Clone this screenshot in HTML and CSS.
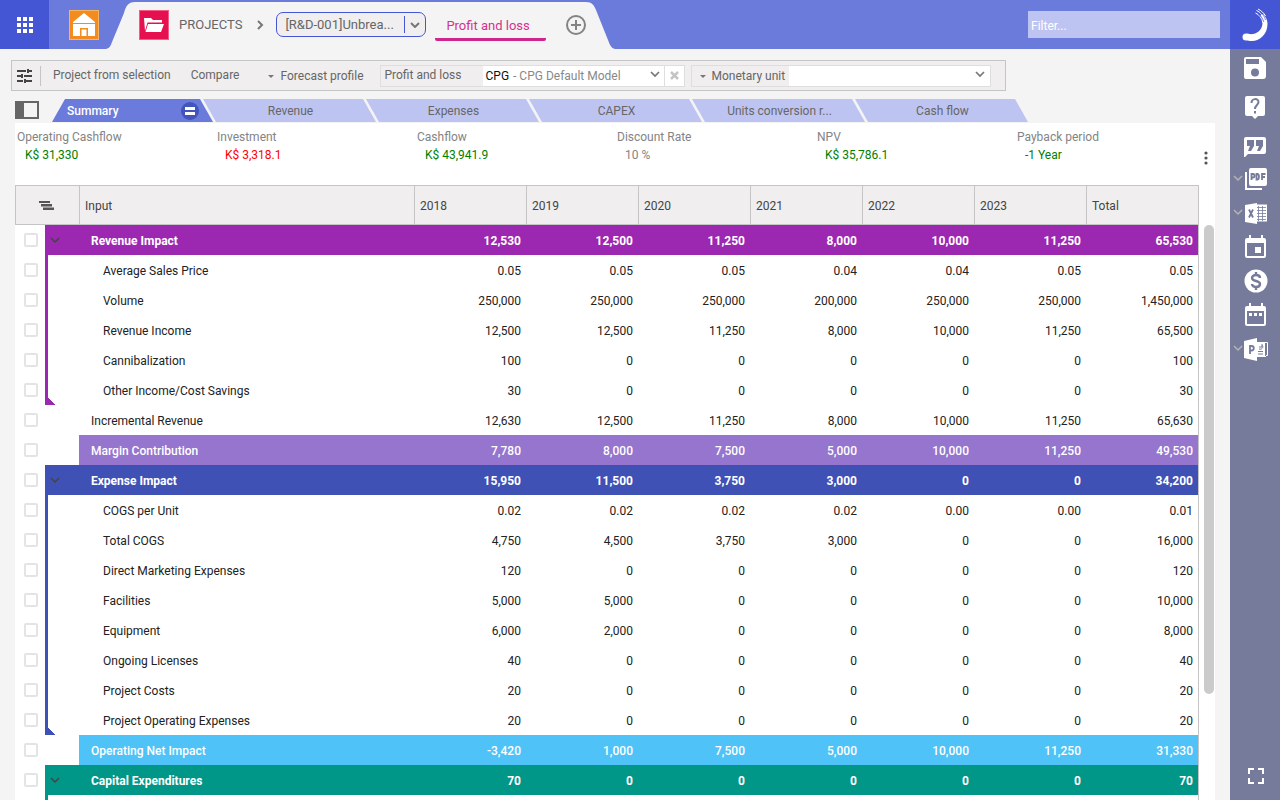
FILE: index.html
```html
<!DOCTYPE html>
<html lang="en">
<head>
    <meta charset="UTF-8">
    <meta name="viewport" content="width=device-width, initial-scale=1.0">
    <title>Profit and loss</title>
    <link rel="stylesheet" href="styles.css">
</head>
<body>
<div class="app">
    <main class="main">
        <!-- Top bar -->
        <header class="topbar">
            <button class="apps-button" aria-label="Applications">
                <svg width="16" height="16" viewBox="0 0 16 16" fill="#fff"><path d="M0 0h4v4H0zM6 0h4v4H6zM12 0h4v4h-4zM0 6h4v4H0zM6 6h4v4H6zM12 6h4v4h-4zM0 12h4v4H0zM6 12h4v4H6zM12 12h4v4h-4z"/></svg>
            </button>
            <a class="home-link" href="#" aria-label="Home">
                <svg width="30" height="30" viewBox="0 0 30 30">
                    <path fill="#f7b562" d="M0 0h30v30H0z"/><path fill="#f28c1e" d="M1 1h28v28H1z"/>
                    <path fill="#fff" d="M15 3l11 9v1H4v-1zM4 14h22v12H4z"/>
                    <path fill="#f28c1e" d="M11 18h8v8h-8z"/><path fill="#fff" d="M12.500 19.500h5V26h-5z"/>
                </svg>
            </a>
            <svg class="crumb-edge" width="29" height="47" viewBox="0 0 29 47" fill="#f4f4f4"><path d="M0 47C4 46 5 43 6 40L18 11C20 4 22 0 29 0V47z"/></svg>
            <nav class="crumbs">
                <svg width="30" height="30" viewBox="0 0 30 30">
                    <path fill="#f25c86" d="M0 0h30v30H0z"/><path fill="#e60f50" d="M1 1h28v28H1z"/>
                    <path fill="#fff" d="M6 21L5 8h7l2 2h9v2.500H8.500z"/>
                    <path fill="#fff" d="M9 14h16l-3 8H6.500z"/>
                </svg>
                <a class="crumb" href="#">PROJECTS</a>
                <svg class="crumb-arrow" width="8" height="10" viewBox="0 0 8 10" fill="none" stroke="#777" stroke-width="2"><path d="M2 1l4 4-4 4"/></svg>
                <div class="project-pick">
                    <select class="project-select" aria-label="Project"><option>[R&amp;D-001]Unbrea...</option></select>
                    <span class="project-line"></span>
                    <svg width="10" height="6" viewBox="0 0 10 6" fill="none" stroke="#777" stroke-width="2"><path d="M1 1l4 4 4-4"/></svg>
                </div>
                <a class="crumb-current" href="#">Profit and loss</a>
                <button class="add-button" aria-label="Add">
                    <svg width="20" height="20" viewBox="0 0 20 20" fill="none" stroke="#848484" stroke-width="2"><circle cx="10" cy="10" r="9"/><path d="M10 5v10M5 10h10"/></svg>
                </button>
            </nav>
            <svg class="crumb-edge" width="29" height="47" viewBox="0 0 29 47" fill="#f4f4f4"><path d="M0 0C6 0 8 3 10 8L22 38C24 43 25 46 29 47H0z"/></svg>
            <input class="filter" type="text" placeholder="Filter..." aria-label="Filter">
        </header>

        <!-- Toolbar -->
        <div class="toolbar">
            <button class="tool-button tune" aria-label="Settings">
                <svg width="16" height="14" viewBox="0 0 16 14" fill="#444"><path d="M0 1h9v2H0zM10 0h2v4h-2zM12 1h3v2h-3zM0 6h4v2H0zM4 5h2v4H4zM7 6h8v2H7zM0 11h6v2H0zM7 10h2v4H7zM9 11h6v2H9z"/></svg>
            </button>
            <button class="tool-button">Project from selection</button>
            <button class="tool-button compare">Compare</button>
            <button class="tool-button forecast"><span class="caret"></span>Forecast profile</button>
            <div class="field">
                <label class="field-label" for="model">Profit and loss</label>
                <div class="field-box model-box">
                    <span class="code">CPG</span>
                    <select id="model"><option>- CPG Default Model</option></select>
                    <svg width="12" height="10" viewBox="0 0 12 10" fill="none" stroke="#777" stroke-width="1.700"><path d="M2 1l4 4 4-4"/></svg>
                </div>
                <button class="clear" aria-label="Clear model">
                    <svg width="9" height="9" viewBox="0 0 9 9" fill="none" stroke="#c4c4c4" stroke-width="2.500"><path d="M1 1l7 7M8 1L1 8"/></svg>
                </button>
            </div>
            <div class="field">
                <label class="field-label unit-label" for="unit"><span class="caret"></span>Monetary unit</label>
                <div class="field-box unit-box">
                    <select id="unit"><option></option></select>
                    <svg width="12" height="10" viewBox="0 0 12 10" fill="none" stroke="#777" stroke-width="1.700"><path d="M2 1l4 4 4-4"/></svg>
                </div>
            </div>
        </div>

        <!-- Tabs -->
        <div class="tabs">
            <button class="side-toggle" aria-label="Toggle side panel">
                <svg width="24" height="18" viewBox="0 0 24 18"><path fill="#666" d="M0 0h24v18H0z"/><path fill="#f4f4f4" d="M9 2h13v14H9z"/></svg>
            </button>
            <button class="tab active">Summary
                <svg width="18" height="18" viewBox="0 0 18 18"><circle cx="9" cy="9" r="9" fill="#4355bd"/><path fill="#fff" d="M4 5h10v3H4zM4 10h10v3H4z"/></svg>
            </button>
            <button class="tab">Revenue</button>
            <button class="tab">Expenses</button>
            <button class="tab">CAPEX</button>
            <button class="tab">Units conversion r...</button>
            <button class="tab">Cash flow</button>
        </div>

        <section class="panel">
            <div class="kpis">
                <div class="kpi"><span>Operating Cashflow</span><b class="good">K$ 31,330</b></div>
                <div class="kpi"><span>Investment</span><b class="bad">K$ 3,318.1</b></div>
                <div class="kpi"><span>Cashflow</span><b class="good">K$ 43,941.9</b></div>
                <div class="kpi"><span>Discount Rate</span><b>10 %</b></div>
                <div class="kpi"><span>NPV</span><b class="good">K$ 35,786.1</b></div>
                <div class="kpi"><span>Payback period</span><b class="good">-1 Year</b></div>
                <button class="more" aria-label="More">
                    <svg width="4" height="14" viewBox="0 0 4 14" fill="#555"><circle cx="2" cy="2" r="1.600"/><circle cx="2" cy="7" r="1.600"/><circle cx="2" cy="12" r="1.600"/></svg>
                </button>
            </div>

            <div class="sheet">
                <table class="grid">
                    <colgroup><col class="c-check"><col class="c-gutter"><col><col class="c-num"><col class="c-num"><col class="c-num"><col class="c-num"><col class="c-num"><col class="c-num"><col class="c-total"></colgroup>
                    <thead>
                        <tr>
                            <th colspan="2" class="outline"><svg width="15" height="9" viewBox="0 0 15 9" fill="#555"><path d="M0 0h11v2H0zM2 3h11v2.500H2zM4 6.500h11V9H4z"/></svg></th>
                            <th>Input</th><th>2018</th><th>2019</th><th>2020</th><th>2021</th><th>2022</th><th>2023</th><th>Total</th>
                        </tr>
                    </thead>
                    <!-- Revenue -->
                    <tbody class="revenue">
                        <tr class="group"><td><input type="checkbox" aria-label="Revenue Impact"></td><td><svg class="fold" width="10" height="6" viewBox="0 0 10 6"><path d="M1 1l4 4 4-4"/></svg></td><td>Revenue Impact</td><td>12,530</td><td>12,500</td><td>11,250</td><td>8,000</td><td>10,000</td><td>11,250</td><td>65,530</td></tr>
                        <tr class="child"><td><input type="checkbox" aria-label="Average Sales Price"></td><td></td><td>Average Sales Price</td><td>0.05</td><td>0.05</td><td>0.05</td><td>0.04</td><td>0.04</td><td>0.05</td><td>0.05</td></tr>
                        <tr class="child"><td><input type="checkbox" aria-label="Volume"></td><td></td><td>Volume</td><td>250,000</td><td>250,000</td><td>250,000</td><td>200,000</td><td>250,000</td><td>250,000</td><td>1,450,000</td></tr>
                        <tr class="child"><td><input type="checkbox" aria-label="Revenue Income"></td><td></td><td>Revenue Income</td><td>12,500</td><td>12,500</td><td>11,250</td><td>8,000</td><td>10,000</td><td>11,250</td><td>65,500</td></tr>
                        <tr class="child"><td><input type="checkbox" aria-label="Cannibalization"></td><td></td><td>Cannibalization</td><td>100</td><td>0</td><td>0</td><td>0</td><td>0</td><td>0</td><td>100</td></tr>
                        <tr class="child last"><td><input type="checkbox" aria-label="Other Income/Cost Savings"></td><td></td><td>Other Income/Cost Savings</td><td>30</td><td>0</td><td>0</td><td>0</td><td>0</td><td>0</td><td>30</td></tr>
                    </tbody>
                    <tbody>
                        <tr><td><input type="checkbox" aria-label="Incremental Revenue"></td><td></td><td>Incremental Revenue</td><td>12,630</td><td>12,500</td><td>11,250</td><td>8,000</td><td>10,000</td><td>11,250</td><td>65,630</td></tr>
                        <tr class="sum margin"><td><input type="checkbox" aria-label="Margin Contribution"></td><td></td><td>Margin Contribution</td><td>7,780</td><td>8,000</td><td>7,500</td><td>5,000</td><td>10,000</td><td>11,250</td><td>49,530</td></tr>
                    </tbody>
                    <!-- Expenses -->
                    <tbody class="expense">
                        <tr class="group"><td><input type="checkbox" aria-label="Expense Impact"></td><td><svg class="fold" width="10" height="6" viewBox="0 0 10 6"><path d="M1 1l4 4 4-4"/></svg></td><td>Expense Impact</td><td>15,950</td><td>11,500</td><td>3,750</td><td>3,000</td><td>0</td><td>0</td><td>34,200</td></tr>
                        <tr class="child"><td><input type="checkbox" aria-label="COGS per Unit"></td><td></td><td>COGS per Unit</td><td>0.02</td><td>0.02</td><td>0.02</td><td>0.02</td><td>0.00</td><td>0.00</td><td>0.01</td></tr>
                        <tr class="child"><td><input type="checkbox" aria-label="Total COGS"></td><td></td><td>Total COGS</td><td>4,750</td><td>4,500</td><td>3,750</td><td>3,000</td><td>0</td><td>0</td><td>16,000</td></tr>
                        <tr class="child"><td><input type="checkbox" aria-label="Direct Marketing Expenses"></td><td></td><td>Direct Marketing Expenses</td><td>120</td><td>0</td><td>0</td><td>0</td><td>0</td><td>0</td><td>120</td></tr>
                        <tr class="child"><td><input type="checkbox" aria-label="Facilities"></td><td></td><td>Facilities</td><td>5,000</td><td>5,000</td><td>0</td><td>0</td><td>0</td><td>0</td><td>10,000</td></tr>
                        <tr class="child"><td><input type="checkbox" aria-label="Equipment"></td><td></td><td>Equipment</td><td>6,000</td><td>2,000</td><td>0</td><td>0</td><td>0</td><td>0</td><td>8,000</td></tr>
                        <tr class="child"><td><input type="checkbox" aria-label="Ongoing Licenses"></td><td></td><td>Ongoing Licenses</td><td>40</td><td>0</td><td>0</td><td>0</td><td>0</td><td>0</td><td>40</td></tr>
                        <tr class="child"><td><input type="checkbox" aria-label="Project Costs"></td><td></td><td>Project Costs</td><td>20</td><td>0</td><td>0</td><td>0</td><td>0</td><td>0</td><td>20</td></tr>
                        <tr class="child last"><td><input type="checkbox" aria-label="Project Operating Expenses"></td><td></td><td>Project Operating Expenses</td><td>20</td><td>0</td><td>0</td><td>0</td><td>0</td><td>0</td><td>20</td></tr>
                    </tbody>
                    <tbody>
                        <tr class="sum net"><td><input type="checkbox" aria-label="Operating Net Impact"></td><td></td><td>Operating Net Impact</td><td>-3,420</td><td>1,000</td><td>7,500</td><td>5,000</td><td>10,000</td><td>11,250</td><td>31,330</td></tr>
                    </tbody>
                    <!-- Capital -->
                    <tbody class="capital">
                        <tr class="group"><td><input type="checkbox" aria-label="Capital Expenditures"></td><td><svg class="fold" width="10" height="6" viewBox="0 0 10 6"><path d="M1 1l4 4 4-4"/></svg></td><td>Capital Expenditures</td><td>70</td><td>0</td><td>0</td><td>0</td><td>0</td><td>0</td><td>70</td></tr>
                        <tr class="child"><td></td><td></td><td></td><td></td><td></td><td></td><td></td><td></td><td></td><td></td></tr>
                    </tbody>
                </table>
                <div class="scroll"><div class="thumb"></div></div>
            </div>
        </section>
    </main>

    <!-- Right rail -->
    <aside class="rail">
        <div class="logo">
            <svg width="28" height="36" viewBox="0 0 28 36">
                <path fill="#fff" d="M21 7C24 10 25.500 13 25.500 17C25.500 27 18 34 10 34C7 34 6 33.500 4 33.500A3.500 3.500 0 0 1 4 26.500C6 26.500 8 27.500 11 27C17 26 20.500 21 20.500 16C20.500 13 20 11 18.500 8.500z"/>
                <path fill="none" stroke="#fff" d="M16 2C19 3.500 22 6 23.500 9M14.500 3.500C18 5 21 8 22.500 12M13.500 6C17 7.500 20 11 21 16"/>
                <path fill="none" stroke="#4456d4" stroke-width=".7" d="M18 5C21 7 22.500 9.500 23.500 13M17 7.500C19.500 9.500 21 12 21.800 15"/>
            </svg>
        </div>
        <button class="rail-button spaced" aria-label="Save">
            <svg width="24" height="24" viewBox="0 0 24 24"><path fill="#fff" d="M2 0h15l5 5v14a3 3 0 0 1-3 3H2a2 2 0 0 1-2-2V2a2 2 0 0 1 2-2z"/><path fill="#767b9b" d="M2 2h13v5H2z"/><circle cx="11" cy="15.500" r="4" fill="#767b9b"/></svg>
        </button>
        <button class="rail-button spaced" aria-label="Help">
            <svg width="24" height="24" viewBox="0 0 24 24"><path fill="#fff" d="M3 1h16a2 2 0 0 1 2 2v16a2 2 0 0 1-2 2h-5l-3 3-3-3H3a2 2 0 0 1-2-2V3a2 2 0 0 1 2-2z"/><path fill="none" stroke="#767b9b" stroke-width="2" d="M7.500 8c0-5 7-5 7-1 0 3-3.500 3-3.500 7M11 16v2.500"/></svg>
        </button>
        <button class="rail-button" aria-label="Comments">
            <svg width="24" height="24" viewBox="0 0 24 24"><path fill="#fff" d="M2 4h18a2 2 0 0 1 2 2v13a2 2 0 0 1-2 2H4l-4 4V6a2 2 0 0 1 2-2z"/><path fill="#767b9b" d="M3 7h7v6l-3 5H4l2-5H3zM12 7h7v6l-3 5h-3l2-5h-3z"/></svg>
        </button>
        <button class="rail-button" aria-label="Export to PDF">
            <svg class="rail-arrow" width="8" height="5" viewBox="0 0 8 5"><path d="M0 0l4 4 4-4"/></svg>
            <svg width="24" height="24" viewBox="0 0 24 24"><path fill="none" stroke="#fff" stroke-width="2" d="M2 5v17h16"/><rect x="5" y="1" width="18" height="18" rx="2" fill="#fff"/><path fill="none" stroke="#767b9b" stroke-width="1.800" d="M7.500 13V7h1.500c2 0 2 3.500 0 3.500H7.500M12.500 7v5.500h.8c2.200 0 2.200-5.500 0-5.500zM18 13V7h3.500M18 10h3"/></svg>
        </button>
        <button class="rail-button" aria-label="Export to Excel">
            <svg class="rail-arrow" width="8" height="5" viewBox="0 0 8 5"><path d="M0 0l4 4 4-4"/></svg>
            <svg width="24" height="24" viewBox="0 0 24 24"><path fill="#fff" d="M1 4l12-2v21L1 21z"/><path fill="#fff" d="M13 3.500h10v17H13z"/><path fill="none" stroke="#767b9b" stroke-width=".8" d="M13 6.500h9M13 9.500h9M13 12.500h9M13 15.500h9M13 18.500h9M14.500 5v15M18.500 5v15"/><path fill="none" stroke="#767b9b" stroke-width="1.800" d="M5 8.500l4 8M9 8.500l-4 8"/></svg>
        </button>
        <button class="rail-button" aria-label="Calendar">
            <svg width="24" height="24" viewBox="0 0 24 24"><path fill="#fff" fill-rule="evenodd" d="M5 0h2v3h10V0h2v3h1a2 2 0 0 1 2 2v16a2 2 0 0 1-2 2H3a2 2 0 0 1-2-2V5a2 2 0 0 1 2-2h2zM3 8v13h17V8zM11 12h6v6h-6z"/></svg>
        </button>
        <button class="rail-button" aria-label="Costs">
            <svg width="24" height="24" viewBox="0 0 24 24"><circle cx="12" cy="12" r="11.500" fill="#fff"/><path fill="none" stroke="#767b9b" stroke-width="2.400" d="M12 3v3M12 18v3M16 9c0-4-8-4-8 0 0 4 8 2 8 6 0 4-8 4-8 0"/></svg>
        </button>
        <button class="rail-button" aria-label="Schedule">
            <svg width="24" height="24" viewBox="0 0 24 24"><path fill="#fff" fill-rule="evenodd" d="M5 0h2v3h10V0h2v3h1a2 2 0 0 1 2 2v16a2 2 0 0 1-2 2H3a2 2 0 0 1-2-2V5a2 2 0 0 1 2-2h2zM3 8v13h17V8zM5 10h3v3H5zM10 10h3v3h-3zM15 10h3v3h-3z"/></svg>
        </button>
        <button class="rail-button" aria-label="Export to PowerPoint">
            <svg class="rail-arrow" width="8" height="5" viewBox="0 0 8 5"><path d="M0 0l4 4 4-4"/></svg>
            <svg width="24" height="24" viewBox="0 0 24 24"><path fill="#fff" d="M0 4l13-3v23L0 21z"/><path fill="#fff" d="M13 5h9v15h-9z"/><path fill="none" stroke="#fff" d="M22 5.500h1.500v13H22"/><path fill="none" stroke="#767b9b" d="M21.500 6v13M14 14.500h5M14 17h5M18 7v3h-3M15 12c3 1 5-2 3-4"/><path fill="none" stroke="#767b9b" stroke-width="1.800" d="M6 17V9h1.500c3 0 3 4.500 0 4.500H6"/></svg>
        </button>
        <button class="rail-button fullscreen" aria-label="Full screen">
            <svg width="16" height="16" viewBox="0 0 16 16" fill="none" stroke="#fff" stroke-width="2"><path d="M1 6V1h5M10 1h5v5M15 10v5h-5M6 15H1v-5"/></svg>
        </button>
    </aside>
</div>
</body>
</html>
```

FILE: styles.css
```css
* {
    box-sizing: border-box;
}
body {
    margin: 0;
    font-family: Roboto, "Liberation Sans", sans-serif;
    font-size: 12px;
    color: #666;
    background-color: #f4f4f4;
}
button, select, input {
    font-family: inherit;
    font-size: inherit;
    color: inherit;
}
button {
    padding: 0;
    border: none;
    background: none;
    cursor: pointer;
}
a {
    color: inherit;
    text-decoration: none;
}
svg {
    display: block;
    flex: none;
}
select {
    appearance: none;
    border: none;
    padding: 0;
    background: none;
    outline: none;
}
.app {
    display: flex;
    height: 100vh;
    overflow: hidden;
}
.main {
    flex: 1;
    min-width: 0;
    display: flex;
    flex-direction: column;
}

/* Top bar */
.topbar {
    display: flex;
    align-items: center;
    flex: none;
    height: 49px;
    background-color: #6b7bdb;
}
.apps-button {
    display: flex;
    align-items: center;
    justify-content: center;
    width: 49px;
    height: 49px;
    background-color: #4456d4;
}
.home-link {
    padding: 0 7px 0 20px;
}
.crumb-edge {
    align-self: flex-end;
}
.crumbs {
    display: flex;
    align-items: center;
    align-self: flex-end;
    height: 47px;
    padding: 0 0 2px 4px;
    background-color: #f4f4f4;
    font-size: 13px;
}
.crumb {
    margin: 0 14px 0 10px;
}
.project-pick {
    display: flex;
    align-items: center;
    gap: 5px;
    width: 150px;
    height: 25px;
    margin: 0 9px 0 12px;
    padding: 0 5px 0 8px;
    border: 1px solid #4456d4;
    border-radius: 7px;
    background-color: #f0eeee;
}
.project-select {
    flex: 1;
    min-width: 0;
}
.project-line {
    width: 1px;
    height: 17px;
    background-color: #4456d4;
}
.crumb-current {
    width: 111px;
    height: 33px;
    padding-left: 11px;
    border-bottom: 3px solid #cf258f;
    border-radius: 2px;
    color: #d4318f;
    line-height: 35px;
}
.add-button {
    margin-left: 20px;
}
.filter {
    width: 192px;
    height: 27px;
    margin: 0 10px 0 auto;
    padding: 2px 3px 0;
    border: none;
    background-color: #bec4f1;
}
.filter::placeholder {
    color: #fff;
}

/* Toolbar */
.toolbar {
    display: flex;
    align-items: center;
    align-self: flex-start;
    height: 31px;
    margin: 11px 0 8px 11px;
    padding: 0 14px 0 5px;
    border: 1px solid #c5c5c5;
    background-color: #f0eeee;
}
.tool-button {
    margin-right: 20px;
    padding-bottom: 2px;
}
.tool-button.tune {
    height: 20px;
    margin-right: 12px;
    padding: 0 7px 0 0;
    border-right: 1px solid #c5c5c5;
}
.tool-button.compare {
    margin-right: 29px;
}
.tool-button.forecast {
    margin-right: 16px;
    padding-bottom: 0;
}
.caret {
    display: inline-block;
    margin-right: 6px;
    border: 3px solid transparent;
    border-top-color: #777;
    border-bottom: none;
    vertical-align: middle;
}
.field {
    display: flex;
    height: 22px;
    margin-right: 6px;
    border: 1px solid #dedede;
}
.field:last-child {
    margin-right: 0;
}
.field-label {
    width: 102px;
    padding-left: 4px;
    line-height: 19px;
    white-space: nowrap;
}
.unit-label {
    width: 97px;
    padding-left: 8px;
    line-height: 21px;
    overflow: hidden;
}
.field-box {
    display: flex;
    align-items: center;
    gap: 4px;
    width: 181px;
    padding: 0 3px;
    background-color: #fff;
}
.field-box select {
    flex: 1;
    min-width: 0;
    color: #888;
}
.unit-box {
    width: 201px;
    padding-right: 4px;
}
.code {
    color: #111;
}
.clear {
    display: flex;
    align-items: center;
    justify-content: center;
    width: 20px;
    border-left: 1px solid #dedede;
    background-color: #fff;
}

/* Tabs */
.tabs {
    display: flex;
    height: 24px;
    padding-left: 15px;
}
.side-toggle {
    margin-right: 13px;
    padding-bottom: 2px;
}
.tab {
    width: 173px;
    height: 23px;
    margin-left: -10px;
    padding-left: 2px;
    background-color: #bec4f1;
    clip-path: polygon(0 0, 160px 0, 100% 100%, 13px 100%);
}
.tab.active {
    display: flex;
    align-items: center;
    justify-content: space-between;
    width: 161px;
    margin-left: 0;
    padding: 0 14px 0 15px;
    background-color: #6b7bdb;
    color: #fff;
    font-weight: 500;
    clip-path: polygon(13px 0, 148px 0, 100% 100%, 0 100%);
}

/* Summary panel */
.panel {
    display: flex;
    flex: 1;
    flex-direction: column;
    min-height: 0;
    margin: 0 15px;
    background-color: #fff;
}
.kpis {
    position: relative;
    display: grid;
    grid-template-columns: repeat(6, 1fr);
    flex: none;
    height: 62px;
    padding-top: 5px;
}
.kpi {
    padding-left: 2px;
    line-height: 18px;
    color: #848484;
}
.kpi b {
    display: block;
    padding-left: 8px;
    font-weight: 400;
}
.kpi .good {
    color: #008000;
}
.kpi .bad {
    color: #f00;
}
.more {
    position: absolute;
    right: 7px;
    bottom: 20px;
}
.sheet {
    display: flex;
    align-items: flex-start;
    min-height: 0;
    overflow: hidden;
}
.grid {
    flex: 1;
    table-layout: fixed;
    width: 100%;
    border-spacing: 0;
    color: #222;
}
.c-check {
    width: 30px;
}
.c-gutter {
    width: 34px;
}
.c-num {
    width: 112px;
}
.c-total {
    width: 113px;
}
.grid th {
    height: 40px;
    padding: 2px 5px 0;
    border: solid #c5c5c5;
    border-width: 1px 0 1px 1px;
    background-color: #f0eeee;
    color: #444;
    font-weight: 400;
    text-align: left;
}
.grid th:last-child {
    border-right-width: 1px;
}
.grid .outline {
    padding: 0 0 0 23px;
}
.grid td {
    height: 30px;
    padding: 1px 5px 0 0;
    text-align: right;
}
.grid td:last-child {
    border-right: 1px solid #c5c5c5;
}
.grid td:first-child {
    padding: 0 0 0 9px;
}
.grid td:nth-child(3) {
    padding-left: 12px;
    text-align: left;
}
.grid .child td:nth-child(3) {
    padding-left: 24px;
}
.grid input {
    display: block;
    appearance: none;
    width: 14px;
    height: 14px;
    margin: 0;
    border: 2px solid #e4e4e4;
    border-radius: 2px;
    background-color: #fff;
}
.grid .group td:nth-child(2) {
    padding-bottom: 2px;
}
.fold {
    margin-left: 5px;
    fill: none;
    stroke: #444;
    stroke-width: 1.5;
}
.revenue {
    --group: #9c27b0;
}
.expense {
    --group: #3f51b5;
}
.capital {
    --group: #009688;
}
.group td:not(:first-child) {
    background-color: var(--group);
    color: #fff;
    font-weight: 700;
}
.child td:nth-child(2) {
    border-left: 3px solid var(--group);
}
/* Corner that closes a group */
.last td:nth-child(2) {
    background: linear-gradient(to top right, var(--group) 50%, transparent 50%) left bottom / 7px 8px no-repeat;
}
.sum td:nth-child(n+3) {
    color: #fff;
    font-weight: 500;
}
.margin td:nth-child(n+3) {
    background-color: #9575cd;
}
.net td:nth-child(n+3) {
    background-color: #4fc3f7;
}
.scroll {
    flex: none;
    width: 16px;
    padding: 40px 1px 0 5px;
}
.thumb {
    height: 469px;
    border-radius: 5px;
    background-color: #cbcbcb;
}

/* Right rail */
.rail {
    display: flex;
    flex-direction: column;
    flex: none;
    width: 50px;
    background-color: #767b9b;
}
.logo {
    height: 49px;
    margin-bottom: 3px;
    padding: 7px 0 0 12px;
    background-color: #4456d4;
}
.rail-button {
    display: flex;
    align-items: center;
    justify-content: flex-end;
    gap: 2px;
    height: 34px;
    padding-right: 12px;
}
.rail-button.spaced {
    margin-bottom: 4px;
}
.rail-arrow {
    margin-bottom: 2px;
    overflow: visible;
    fill: none;
    stroke: #b4b4b4;
    stroke-width: 1.5;
}
.rail-button.fullscreen {
    margin-top: auto;
    margin-bottom: 7px;
    padding-right: 16px;
}
```
